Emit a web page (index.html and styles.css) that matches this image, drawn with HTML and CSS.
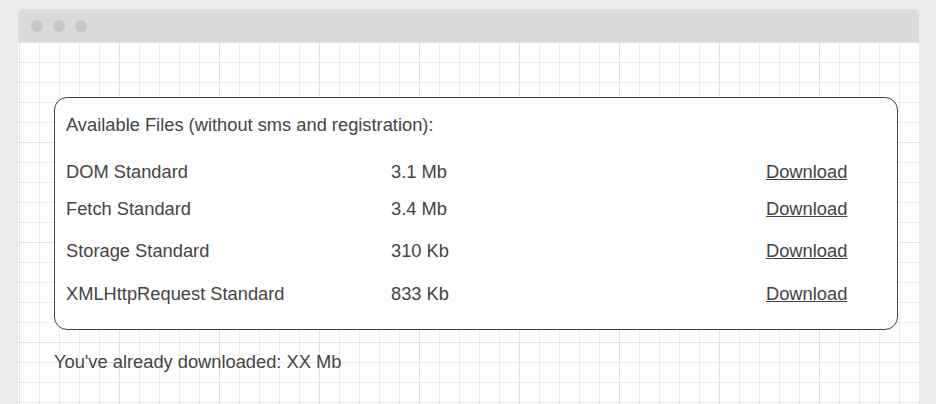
FILE: index.html
```html
<!DOCTYPE html>
<html>
<head>
<meta charset="utf-8">
<link rel="stylesheet" href="styles.css">
</head>
<body>
<div class="window">
  <div class="titlebar">
    <span class="dot"></span><span class="dot"></span><span class="dot"></span>
  </div>
  <div class="content">
    <div class="card">
      <div class="heading">Available Files (without sms and registration):</div>
      <div class="rows">
        <div class="row"><span>DOM Standard</span><span>3.1 Mb</span><a href="#">Download</a></div>
        <div class="row"><span>Fetch Standard</span><span>3.4 Mb</span><a href="#">Download</a></div>
        <div class="row"><span>Storage Standard</span><span>310 Kb</span><a href="#">Download</a></div>
        <div class="row"><span>XMLHttpRequest Standard</span><span>833 Kb</span><a href="#">Download</a></div>
      </div>
    </div>
    <p class="total">You've already downloaded: XX Mb</p>
  </div>
</div>
</body>
</html>
```

FILE: styles.css
```css
html, body {
  margin: 0;
  padding: 0;
}
body {
  background: #ebebeb;
  font-family: "Liberation Sans", Arial, sans-serif;
  font-size: 18.3px;
  line-height: 21px;
  color: #444;
  overflow: hidden;
}
.window {
  margin: 9px 0 0 18px;
  width: 901px;
  height: 395px;
  border-radius: 5px 5px 0 0;
  overflow: hidden;
  background: #fff;
  display: flex;
  flex-direction: column;
}
.titlebar {
  flex: none;
  height: 33px;
  background: #dadada;
  display: flex;
  align-items: center;
  gap: 10px;
  padding-left: 13px;
}
.dot {
  width: 12px;
  height: 12px;
  border-radius: 50%;
  background: #c7c7c7;
}
.content {
  flex: 1;
  padding: 55px 21px 0 36px;
  background-color: #fff;
  background-image:
    linear-gradient(to right, #e2e2e2 1px, transparent 1px),
    linear-gradient(to bottom, #e2e2e2 1px, transparent 1px),
    linear-gradient(to right, #ececec 1px, transparent 1px),
    linear-gradient(to bottom, #ececec 1px, transparent 1px);
  background-size: 100px 100px, 100px 100px, 20px 20px, 20px 20px;
  background-position: 1px 0, 0 0, 1px 0, 0 0;
}
.card {
  border: 1px solid #444;
  border-radius: 13px;
  background: #fff;
  padding: 16px 11px 25px;
}
.heading {
  margin-bottom: 26px;
}
.row {
  display: grid;
  grid-template-columns: 325px 375px auto;
}
.row:nth-child(1) { padding-bottom: 16px; }
.row:nth-child(2) { padding-bottom: 21px; }
.row:nth-child(3) { padding-bottom: 22px; }
.row a {
  color: #444;
  text-decoration: underline;
}
.total {
  margin: 21px 0 0;
}
```
